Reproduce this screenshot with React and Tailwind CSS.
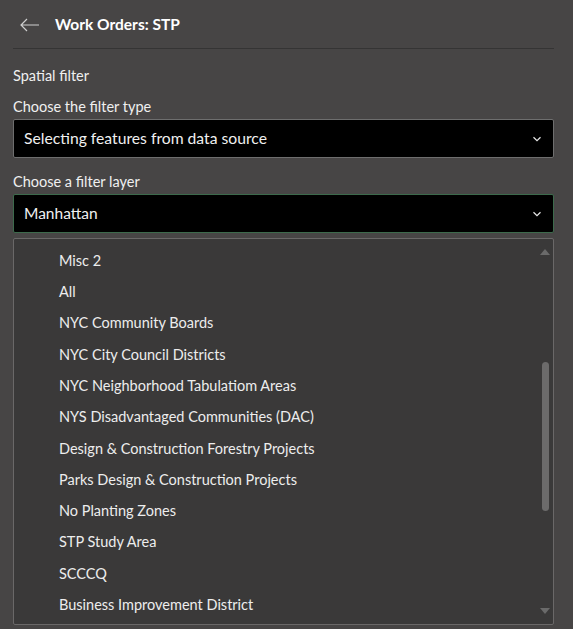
import React from "react";

const items = [
  "Misc 2",
  "All",
  "NYC Community Boards",
  "NYC City Council Districts",
  "NYC Neighborhood Tabulatiom Areas",
  "NYS Disadvantaged Communities (DAC)",
  "Design & Construction Forestry Projects",
  "Parks Design & Construction Projects",
  "No Planting Zones",
  "STP Study Area",
  "SCCCQ",
  "Business Improvement District",
];

function Chevron() {
  return (
    <svg width="10" height="6" viewBox="0 0 10 6" className="shrink-0">
      <path d="M1.5 1.2 L5 4.6 L8.5 1.2" fill="none" stroke="#e8e8e8" strokeWidth="1.2" />
    </svg>
  );
}

export default function App() {
  return (
    <div
      className="w-[573px] h-[629px] bg-[#474545] text-[#f0f0f0] overflow-hidden pt-[1px]"
      style={{ fontFamily: "Lato, 'Open Sans', sans-serif" }}
    >
      <div className="pl-[13px] pr-[19px]">
        <div className="h-[48px] flex items-center border-b border-[#353434]">
          <svg width="20" height="14" viewBox="0 0 20 14" className="ml-[7px] mr-[15px]">
            <path d="M1 7 H19 M7 1 L1 7 L7 13" fill="none" stroke="#cfcfcf" strokeWidth="1.2" />
          </svg>
          <span className="text-[15.5px] font-bold text-white">Work Orders: STP</span>
        </div>
      </div>
      <div className="pl-[13px] pr-[19px]">
        <div className="text-[14.5px] mt-[17px] leading-[20px]">Spatial filter</div>
        <div className="text-[14.5px] mt-[11px] leading-[20px]">Choose the filter type</div>
        <div className="mt-[2px] h-[39px] bg-black border border-[#6e6e6e] rounded-[2px] flex items-center justify-between pl-[10px] pr-[11px]">
          <span className="text-[15.7px]">Selecting features from data source</span>
          <Chevron />
        </div>
        <div className="text-[14.5px] mt-[14px] leading-[20px]">Choose a filter layer</div>
        <div className="mt-[2px] h-[39px] bg-black border border-[#3d6a4c] rounded-[2px] flex items-center justify-between pl-[10px] pr-[11px]">
          <span className="text-[15.5px]">Manhattan</span>
          <Chevron />
        </div>
        <div className="relative mt-[5px] h-[387px] bg-[#3a3939] border border-[#6a6868] rounded-[2px]">
          <div className="pt-[6px] pl-[45px]">
            {items.map((t) => (
              <div key={t} className="h-[31.3px] flex items-center text-[14.5px] text-[#ededed]">
                {t}
              </div>
            ))}
          </div>
          <div className="absolute right-[3px] top-[10px] w-0 h-0 border-l-[5px] border-r-[5px] border-b-[6px] border-l-transparent border-r-transparent border-b-[#6a6a6a]" />
          <div className="absolute right-[4px] top-[123px] w-[7px] h-[149px] rounded-full bg-[#6c6b6b]" />
          <div className="absolute right-[3px] bottom-[10px] w-0 h-0 border-l-[5px] border-r-[5px] border-t-[6px] border-l-transparent border-r-transparent border-t-[#6a6a6a]" />
        </div>
      </div>
    </div>
  );
}
